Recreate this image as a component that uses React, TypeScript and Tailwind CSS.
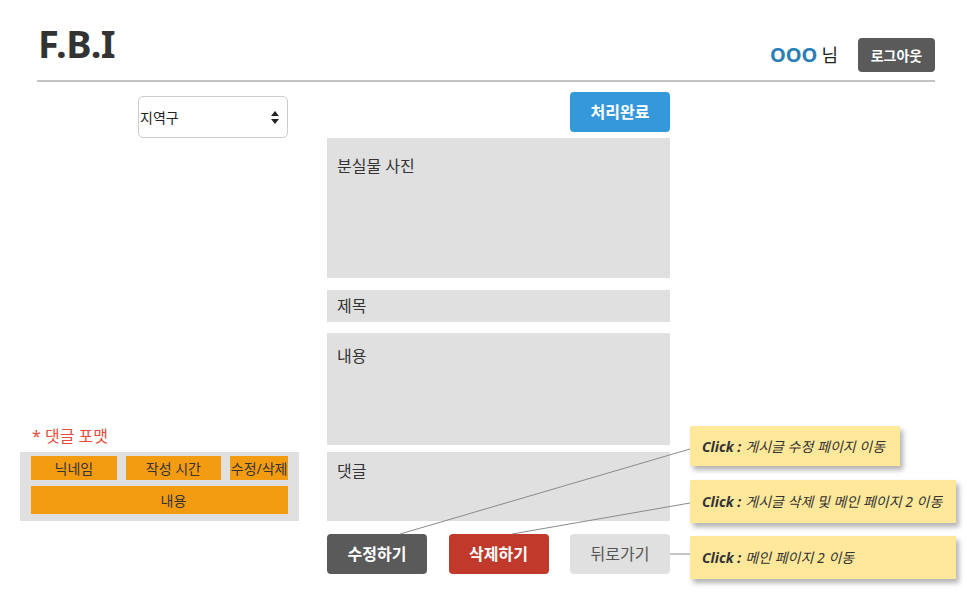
import React from 'react';

const font = "font-['Noto_Sans','Noto_Sans_CJK_KR',sans-serif]";

function Note({ text, width, height }: { text: string; width: string; height: string }) {
  return (
    <div
      className={`${width} ${height} flex items-center pl-[12px] bg-[#ffe89a] shadow-[3px_4px_5px_rgba(0,0,0,0.3)] text-[14px] italic text-[#333]`}
    >
      <span className="font-bold">Click :</span>
      <span className="ml-[4px]">{text}</span>
    </div>
  );
}

export default function App() {
  return (
    <div className={`relative w-[972px] h-[598px] bg-white text-[#333] ${font}`}>
      {/* Header */}
      <header className="mx-[37px] h-[82px] flex items-end justify-between border-b-2 border-[#c4c4c4] pb-[8px]">
        <h1 className="text-[38px] font-bold leading-none tracking-[-0.5px] text-[#333] mb-[10px] ml-[1px]">F.B.I</h1>
        <div className="flex items-center gap-[20px]">
          <div className="flex items-baseline gap-[4px]">
            <span className="text-[20px] font-bold text-[#2980b9]">OOO</span>
            <span className="text-[18px] text-[#222]">님</span>
          </div>
          <button className="w-[77px] h-[34px] rounded-[4px] bg-[#5a5a5a] text-white text-[14px] font-bold">
            로그아웃
          </button>
        </div>
      </header>

      <div className="flex">
        {/* Left column */}
        <div className="w-[327px] flex flex-col">
          <div className="ml-[138px] mt-[14px] w-[150px] h-[42px] border border-[#cccccc] rounded-[5px] flex items-center justify-between pl-[1px] pr-[8px]">
            <span className="text-[14px] text-[#222]">지역구</span>
            <svg width="8" height="16" viewBox="0 0 8 16">
              <path d="M4 2 L8 7 L0 7 Z" fill="#222" />
              <path d="M0 10 L8 10 L4 15 Z" fill="#222" />
            </svg>
          </div>
          <div className="mt-[286px] ml-[32px] text-[16px] text-[#e74c3c]">* 댓글 포맷</div>
          <div className="mt-[4px] ml-[20px] w-[279px] bg-[#e0e0e0] px-[11px] pt-[4px] pb-[7px] flex flex-col gap-[6px]">
            <div className="flex gap-[9px] text-[14px] text-[#333]">
              <div className="w-[86px] h-[24px] bg-[#f39c12] flex items-center justify-center">닉네임</div>
              <div className="w-[96px] h-[24px] bg-[#f39c12] flex items-center justify-center">작성 시간</div>
              <div className="w-[58px] h-[24px] bg-[#f39c12] flex items-center justify-center whitespace-nowrap">수정/삭제</div>
            </div>
            <div className="w-[257px] h-[28px] bg-[#f39c12] flex items-center justify-center pl-[28px] text-[14px] text-[#333]">
              내용
            </div>
          </div>
        </div>

        {/* Center column */}
        <div className="w-[343px] flex flex-col">
          <button className="self-end mt-[10px] w-[100px] h-[40px] rounded-[4px] bg-[#3498db] text-white text-[16px] font-bold">
            처리완료
          </button>
          <div className="mt-[6px] h-[140px] bg-[#e0e0e0] px-[10px] pt-[16px] text-[16px]">분실물 사진</div>
          <div className="mt-[12px] h-[32px] bg-[#e0e0e0] px-[10px] flex items-center text-[16px]">제목</div>
          <div className="mt-[11px] h-[112px] bg-[#e0e0e0] px-[10px] pt-[11px] text-[16px]">내용</div>
          <div className="mt-[7px] h-[69px] bg-[#e0e0e0] px-[10px] pt-[7px] text-[16px]">댓글</div>
          <div className="mt-[13px] flex justify-between">
            <button className="w-[100px] h-[40px] rounded-[4px] bg-[#5a5a5a] text-white text-[16px] font-bold">수정하기</button>
            <button className="w-[100px] h-[40px] rounded-[4px] bg-[#c0392b] text-white text-[16px] font-bold">삭제하기</button>
            <button className="w-[100px] h-[40px] rounded-[4px] bg-[#e0e0e0] text-[#555] text-[16px]">뒤로가기</button>
          </div>
        </div>

        {/* Right column: annotations */}
        <div className="flex flex-col pl-[20px] pt-[344px]">
          <Note width="w-[210px]" height="h-[40px]" text="게시글 수정 페이지 이동" />
          <div className="h-[14px]" />
          <Note width="w-[266px]" height="h-[43px]" text="게시글 삭제 및 메인 페이지 2 이동" />
          <div className="h-[13px]" />
          <Note width="w-[266px]" height="h-[43px]" text="메인 페이지 2 이동" />
        </div>
      </div>

      {/* connector lines */}
      <svg className="absolute left-0 top-0 pointer-events-none" width="972" height="598">
        <line x1="400" y1="534" x2="690" y2="449" stroke="#8a8a8a" strokeWidth="1" />
        <line x1="512" y1="534" x2="690" y2="503" stroke="#8a8a8a" strokeWidth="1" />
        <line x1="670" y1="554" x2="690" y2="554" stroke="#8a8a8a" strokeWidth="1" />
      </svg>
    </div>
  );
}
